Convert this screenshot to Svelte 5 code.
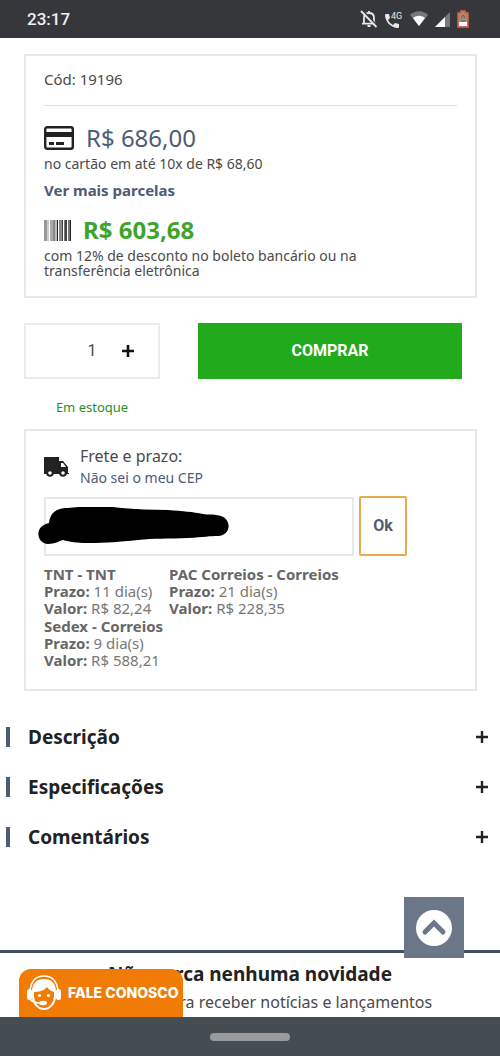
<script lang="ts">
	type Shipping = { name: string; days: number; price: string };

	const shippingOptions: Shipping[] = [
		{ name: 'TNT - TNT', days: 11, price: 'R$ 82,24' },
		{ name: 'PAC Correios - Correios', days: 21, price: 'R$ 228,35' },
		{ name: 'Sedex - Correios', days: 9, price: 'R$ 588,21' }
	];

	const sections = ['Descrição', 'Especificações', 'Comentários'];

	// x, width and shade of every bar in the boleto icon
	const bars = [
		[0, 3, '#999'],
		[3, 2, '#ccc'],
		[6, 3, '#aaa'],
		[9, 2, '#888'],
		[11, 2, '#bbb'],
		[13, 1, '#222'],
		[15, 3, '#888'],
		[18, 1, '#444'],
		[20, 1, '#777'],
		[21, 2, '#444'],
		[24, 2, '#777'],
		[26, 1, '#222']
	];

	let quantity = $state(1);
	let cep = $state('');

	function scrollTop() {
		window.scrollTo({ top: 0, behavior: 'smooth' });
	}
</script>

<div class="page">
	<header class="status">
		<span class="clock">23:17</span>
		<div class="status-icons">
			<svg width="18" height="18" viewBox="0 0 18 18" fill="none" stroke="#e8e8ea" stroke-width="1.8">
				<path d="M4 13V8c0-3 2-5 5-5s5 2 5 5v5M2 13.6h14M9 1v2" />
				<path d="M7.5 16h3" stroke-width="2" />
				<path d="M2.5 0.5l15 16" stroke="#36373b" stroke-width="2" />
				<path d="M1 1l15.5 16" />
			</svg>
			<svg width="18" height="18" viewBox="0 0 18 18">
				<path
					d="M1 4h3l1 4-2 2c1 2 3 4 5 5l2-2 4 1v3c0 1-1 1-2 1C5 17 1 12 0 6c0-1 0-2 1-2z"
					fill="#e8e8ea"
				/>
				<text x="6" y="9" class="net">4G</text>
			</svg>
			<svg width="18" height="16" viewBox="0 0 18 16">
				<path d="M0 4c5-5 13-5 18 0L9 15z" fill="#77787b" />
				<path d="M3 7c4-3 8-3 12 0l-6 8z" fill="#fff" />
			</svg>
			<svg width="15" height="15" viewBox="0 0 15 15">
				<path d="M15 0v15H0z" fill="#77787b" />
				<path d="M10 5v10H0z" fill="#fff" />
			</svg>
			<svg width="12" height="18" viewBox="0 0 12 18">
				<path d="M4 1h4v2h3v14H1V3h3z" fill="#a9877c" stroke="#e0604c" stroke-width="1.4" />
				<path d="M4 8l2-3 2 3M4 11h4" stroke="#6c5d55" fill="none" />
				<path d="M2 12h8v4H2z" fill="#fff" />
			</svg>
		</div>
	</header>

	<main>
		<section class="card">
			<p class="code">Cód: 19196</p>
			<hr />
			<div class="price">
				<svg width="30" height="24" viewBox="0 0 30 24">
					<rect x="1.2" y="1.2" width="27.6" height="21.6" rx="2" fill="none" stroke="#222" stroke-width="2.4" />
					<path d="M1 6h28v5H1zM5 16h5v3H5zM12 16h8v3h-8z" fill="#222" />
				</svg>
				<span>R$ 686,00</span>
			</div>
			<p>no cartão em até 10x de R$ 68,60</p>
			<a class="more" href="#parcelas">Ver mais parcelas</a>
			<div class="price boleto">
				<svg width="27" height="21" viewBox="0 0 27 21">
					{#each bars as [x, width, fill]}
						<rect {x} {width} {fill} y="0" height="21" />
					{/each}
				</svg>
				<strong>R$ 603,68</strong>
			</div>
			<p class="discount">com 12% de desconto no boleto bancário ou na transferência eletrônica</p>
		</section>

		<div class="buy-row">
			<div class="quantity">
				<input type="text" inputmode="numeric" aria-label="Quantidade" bind:value={quantity} />
				<button type="button" aria-label="Aumentar quantidade" onclick={() => quantity++}>
					<svg width="12" height="12" viewBox="0 0 12 12">
						<path d="M6 0v12M0 6h12" stroke="#111" stroke-width="2.6" />
					</svg>
				</button>
			</div>
			<button type="button" class="buy">COMPRAR</button>
		</div>
		<p class="stock">Em estoque</p>

		<section class="card">
			<div class="freight">
				<svg width="25" height="20" viewBox="0 0 25 20">
					<path d="M1 0h14v4h4l5 6v6h1v1H0V1c0-1 0-1 1-1z" fill="#222" />
					<path d="M17 6h2l3 4h-5z" fill="#fff" />
					<circle cx="6" cy="16" r="2.8" fill="#fff" stroke="#222" stroke-width="2" />
					<circle cx="19" cy="16" r="2.8" fill="#fff" stroke="#222" stroke-width="2" />
				</svg>
				<div>
					<label for="cep">Frete e prazo:</label>
					<a href="#cep">Não sei o meu CEP</a>
				</div>
			</div>
			<form class="cep" onsubmit={(e) => e.preventDefault()}>
				<div class="cep-field">
					<input id="cep" type="text" bind:value={cep} />
					<svg class="scribble" width="192" height="38" viewBox="0 0 192 38">
						<path
							d="M11 16C12 6 18 1 30 1C42-1 65 0 75 0C90 2 110 3 130 3C145 4 155 5 165 7C170 8 173 7 178 8C195 9 194 29 180 29C172 29 166 30 150 31C130 32 115 31 100 33C80 35 70 36 50 36C38 36 32 35 25 33C21 34 17 37 10 37C-2 36-4 19 11 16z"
						/>
					</svg>
				</div>
				<button type="submit">Ok</button>
			</form>
			<ul class="options">
				{#each shippingOptions as option}
					<li>
						<strong>{option.name}</strong><br />
						<strong>Prazo:</strong> {option.days} dia(s)<br />
						<strong>Valor:</strong> {option.price}
					</li>
				{/each}
			</ul>
		</section>

		<div class="sections">
			{#each sections as section}
				<button type="button" aria-expanded="false">
					<span class="mark"></span>
					<span class="title">{section}</span>
					<svg width="12" height="12" viewBox="0 0 12 12">
						<path d="M6 0v12M0 6h12" stroke="#222" stroke-width="2.4" />
					</svg>
				</button>
			{/each}
		</div>
	</main>

	<section class="newsletter">
		<h2>Não perca nenhuma novidade</h2>
		<p>Cadastre-se para receber notícias e lançamentos</p>
	</section>

	<button type="button" class="to-top" aria-label="Voltar ao topo" onclick={scrollTop}>
		<svg width="36" height="36" viewBox="0 0 36 36">
			<circle cx="18" cy="18" r="18" fill="#fff" />
			<path d="M9 22l9-9 9 9" fill="none" stroke="#6b7689" stroke-width="5" stroke-linecap="round" />
		</svg>
	</button>

	<a class="chat" href="#contato">
		<svg width="36" height="36" viewBox="0 0 36 36">
			<path d="M4 16C5 6 10 1 18 1s13 5 14 15" fill="none" stroke="#fff" stroke-width="1.6" />
			<path d="M6 17C6 8 11 4 18 4s12 4 12 13c-4 0-7-2-9-5-3 4-8 5-15 5z" fill="#fff" />
			<path d="M7 16v5c0 7 5 13 11 13s11-6 11-13v-5" fill="none" stroke="#fff" stroke-width="2" />
			<rect x="1" y="14" width="5" height="11" rx="2.5" fill="#fff" />
			<rect x="30" y="14" width="5" height="11" rx="2.5" fill="#fff" />
			<circle cx="13.5" cy="20.5" r="1.6" fill="#fff" />
			<circle cx="22.5" cy="20.5" r="1.6" fill="#fff" />
			<path d="M4 24c2 3 5 4 11 4" fill="none" stroke="#fff" stroke-width="1.5" />
			<ellipse cx="17" cy="28" rx="4" ry="2.2" fill="#fff" />
		</svg>
		<span>FALE CONOSCO</span>
	</a>

	<footer class="navbar"><span class="pill"></span></footer>
</div>

<style>
	:global(body) {
		margin: 0;
		background: #fff;
	}

	.page {
		min-height: 100vh;
		display: flex;
		flex-direction: column;
		font-family: 'Noto Sans', 'Open Sans', sans-serif;
		font-size: 14px;
		line-height: 20px;
		color: #4a4a4a;
	}

	p,
	h2,
	ul {
		margin: 0;
		padding: 0;
	}

	button,
	input {
		box-sizing: border-box;
		margin: 0;
		padding: 0;
		border: 0;
		background: none;
		font: inherit;
		color: inherit;
	}

	a {
		color: #4e5b74;
		text-decoration: none;
	}

	svg {
		display: block;
		flex: none;
	}

	.status {
		display: flex;
		align-items: center;
		justify-content: space-between;
		height: 38px;
		padding: 0 31px 0 27px;
		background: #36373b;
	}

	.clock {
		font-family: Roboto, sans-serif;
		font-size: 17px;
		font-weight: 500;
		color: #eef0f5;
	}

	.status-icons {
		display: flex;
		align-items: center;
		gap: 7px;
	}

	.net {
		font-family: Roboto, sans-serif;
		font-size: 9px;
		fill: #e8e8ea;
	}

	main {
		padding-top: 16px;
	}

	.card {
		margin: 0 23px 0 24px;
		padding: 13px 18px 18px;
		border: 2px solid #e8e8e8;
	}

	.code {
		font-size: 15px;
	}

	hr {
		margin: 16px 0;
		border: 0;
		border-top: 1px solid #e0e0e0;
	}

	.price {
		display: flex;
		align-items: center;
		gap: 12px;
		font-size: 24px;
		line-height: 32px;
		color: #4e5b74;
	}

	.more {
		display: block;
		margin: 6px 0 14px;
		font-size: 15px;
		font-weight: 700;
	}

	.boleto {
		color: #40a42c;
	}

	.discount {
		max-width: 340px;
		margin-top: 2px;
		line-height: 15px;
	}

	.buy-row {
		display: flex;
		gap: 38px;
		margin: 25px 38px 18px 24px;
	}

	.quantity {
		box-sizing: border-box;
		display: flex;
		align-items: center;
		width: 136px;
		height: 56px;
		border: 2px solid #ececf0;
	}

	.quantity input {
		width: 36px;
		margin-left: 48px;
		font-family: Roboto, sans-serif;
		font-size: 16px;
		text-align: center;
	}

	.quantity button {
		display: grid;
		place-items: center;
		width: 36px;
		height: 36px;
	}

	.buy {
		flex: 1;
		background: #20aa1c;
		color: #fff;
		font-family: Roboto, sans-serif;
		font-size: 16px;
		font-weight: 700;
	}

	.stock {
		width: 136px;
		margin: 0 24px 12px;
		font-size: 13px;
		text-align: center;
		color: #25902a;
	}

	.freight {
		display: flex;
		align-items: center;
		gap: 11px;
		padding-top: 2px;
		line-height: 21px;
	}

	.freight label,
	.freight a {
		display: block;
	}

	.freight label {
		font-size: 16px;
	}

	.cep {
		display: flex;
		align-items: center;
		gap: 5px;
		margin: 8px 0 10px;
	}

	.cep-field {
		position: relative;
		flex: 0 1 310px;
	}

	.cep-field input {
		display: block;
		width: 100%;
		height: 59px;
		padding: 0 12px;
		border: 2px solid #e8e8e8;
	}

	.scribble {
		position: absolute;
		top: 10px;
		left: -6px;
		pointer-events: none;
	}

	.cep button {
		width: 48px;
		height: 60px;
		border: 2px solid #e5ab4e;
		border-radius: 2px;
		font-family: Roboto, sans-serif;
		font-size: 16px;
		font-weight: 700;
		color: #4e5b74;
	}

	.options {
		display: grid;
		grid-template-columns: auto auto;
		justify-content: start;
		gap: 1px 6px;
		padding-bottom: 2px;
		list-style: none;
		font-size: 15px;
		line-height: 17px;
		color: #777;
	}

	.options strong {
		color: #666;
	}

	.sections {
		margin: 21px 0 88px;
	}

	.sections button {
		display: flex;
		align-items: center;
		width: 100%;
		height: 50px;
		padding: 0 12px 0 6px;
	}

	.mark {
		width: 4px;
		height: 20px;
		margin-right: 18px;
		background: #4e5b74;
	}

	.title {
		flex: 1;
		font-size: 19px;
		font-weight: 700;
		text-align: left;
		color: #222;
	}

	.newsletter {
		flex: 1;
		padding: 7px 0 44px;
		border-top: 3px solid #43506a;
		text-align: center;
	}

	.newsletter h2 {
		font-size: 19px;
		line-height: 28px;
		color: #222;
	}

	.newsletter p {
		font-size: 16px;
		line-height: 28px;
	}

	.to-top {
		position: fixed;
		right: 36px;
		bottom: 98px;
		display: grid;
		place-items: center;
		width: 60px;
		height: 61px;
		background: #6b7689;
	}

	.chat {
		position: fixed;
		bottom: 39px;
		left: 19px;
		box-sizing: border-box;
		display: flex;
		align-items: center;
		gap: 6px;
		width: 164px;
		height: 48px;
		padding-left: 7px;
		border-radius: 12px 12px 0 0;
		background: #f07c05;
		color: #fff;
		font-family: Inter, sans-serif;
		font-size: 14px;
		font-weight: 800;
		white-space: nowrap;
	}

	.navbar {
		position: fixed;
		right: 0;
		bottom: 0;
		left: 0;
		display: grid;
		place-items: center;
		height: 39px;
		background: #454c52;
	}

	.pill {
		width: 80px;
		height: 8px;
		border-radius: 4px;
		background: #999c9f;
	}
</style>
